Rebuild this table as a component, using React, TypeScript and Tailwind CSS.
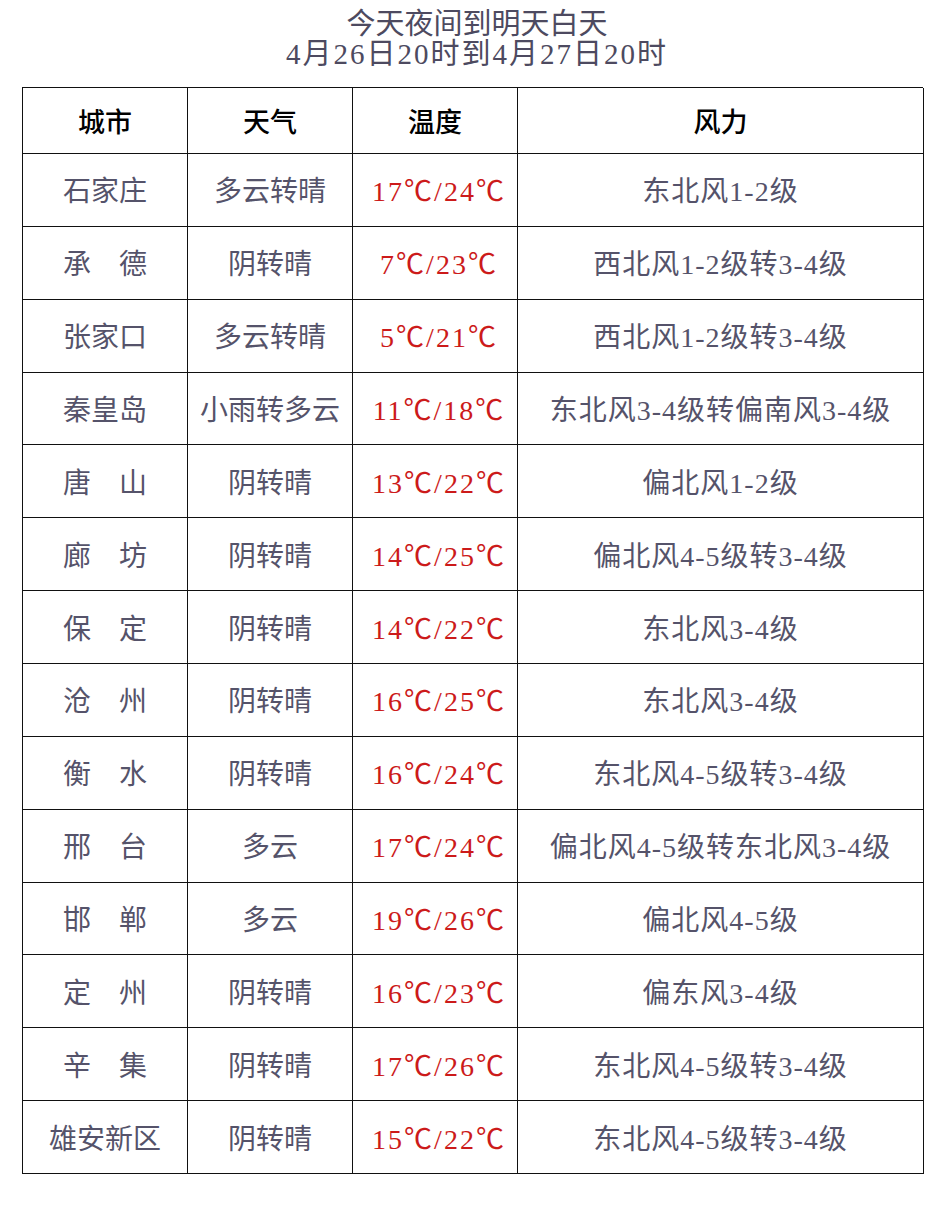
const rows = [
  ['石家庄', '多云转晴', '17℃/24℃', '东北风1-2级'],
  ['承　德', '阴转晴', '7℃/23℃', '西北风1-2级转3-4级'],
  ['张家口', '多云转晴', '5℃/21℃', '西北风1-2级转3-4级'],
  ['秦皇岛', '小雨转多云', '11℃/18℃', '东北风3-4级转偏南风3-4级'],
  ['唐　山', '阴转晴', '13℃/22℃', '偏北风1-2级'],
  ['廊　坊', '阴转晴', '14℃/25℃', '偏北风4-5级转3-4级'],
  ['保　定', '阴转晴', '14℃/22℃', '东北风3-4级'],
  ['沧　州', '阴转晴', '16℃/25℃', '东北风3-4级'],
  ['衡　水', '阴转晴', '16℃/24℃', '东北风4-5级转3-4级'],
  ['邢　台', '多云', '17℃/24℃', '偏北风4-5级转东北风3-4级'],
  ['邯　郸', '多云', '19℃/26℃', '偏北风4-5级'],
  ['定　州', '阴转晴', '16℃/23℃', '偏东风3-4级'],
  ['辛　集', '阴转晴', '17℃/26℃', '东北风4-5级转3-4级'],
  ['雄安新区', '阴转晴', '15℃/22℃', '东北风4-5级转3-4级'],
];

const headers = ['城市', '天气', '温度', '风力'];

export default function App() {
  return (
    <div className="w-[942px] h-[1218px] bg-white font-['Liberation_Serif','Noto_Sans_CJK_SC',serif]">
      <div className="pl-[12px] pt-[9px] text-center text-[29px] leading-[30px] text-[#4d4a60]">
        <p>今天夜间到明天白天</p>
        <p className="tracking-[2px]">4月26日20时到4月27日20时</p>
      </div>

      <div className="mt-[18px] ml-[22px] grid w-[901px] grid-cols-[165px_165px_165px_406px] border-l border-t border-[#111]">
        {headers.map((h) => (
          <div
            key={h}
            className="flex h-[66px] items-center justify-center border-b border-r border-[#111] pt-[6px] text-[27px] font-medium text-black"
          >
            {h}
          </div>
        ))}
        {rows.map((r) => (
          <div key={r[0]} className="contents">
            <div className="flex h-[72.86px] items-center justify-center border-b border-r border-[#111] pt-[5px] text-[28px] text-[#55536a]">
              {r[0]}
            </div>
            <div className="flex h-[72.86px] items-center justify-center border-b border-r border-[#111] pt-[5px] text-[28px] text-[#55536a]">
              {r[1]}
            </div>
            <div className="flex h-[72.86px] items-center justify-center border-b border-r border-[#111] pl-[8px] pt-[5px] text-[28px] tracking-[2px] text-[#cc1a1a]">
              {r[2]}
            </div>
            <div className="flex h-[72.86px] items-center justify-center border-b border-r border-[#111] pt-[5px] text-[28px] tracking-[1px] text-[#55536a]">
              {r[3]}
            </div>
          </div>
        ))}
      </div>
    </div>
  );
}
